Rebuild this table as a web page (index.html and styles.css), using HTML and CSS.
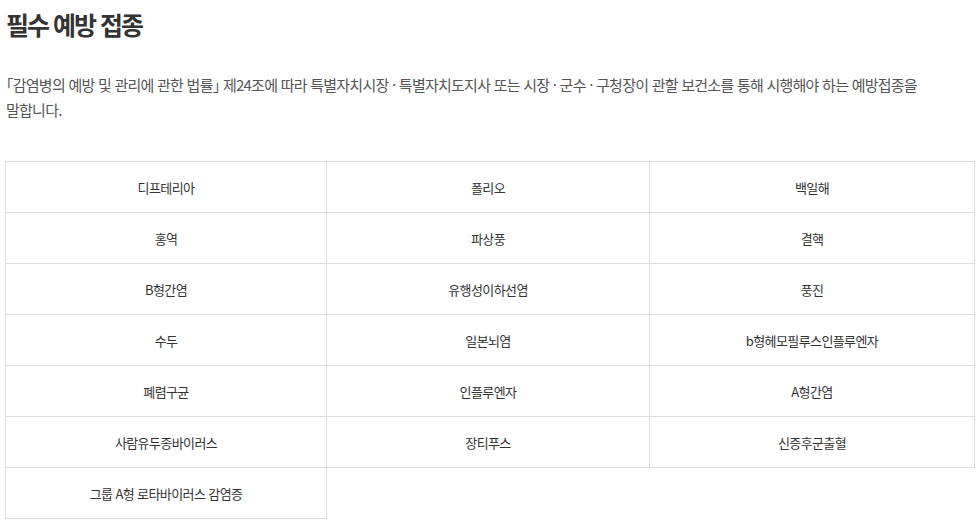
FILE: index.html
```html
<!DOCTYPE html>
<html lang="ko">
<head>
<meta charset="utf-8">
<link rel="stylesheet" href="styles.css">
</head>
<body>
<div class="page">
  <h2 class="title">필수 예방 접종</h2>
  <p class="desc">「감염병의 예방 및 관리에 관한 법률」 제24조에 따라 특별자치시장 · 특별자치도지사 또는 시장 · 군수 · 구청장이 관할 보건소를 통해 시행해야 하는 예방접종을 말합니다.</p>
  <ul class="grid">
    <li class="cell">디프테리아</li>
    <li class="cell">폴리오</li>
    <li class="cell">백일해</li>
    <li class="cell">홍역</li>
    <li class="cell">파상풍</li>
    <li class="cell">결핵</li>
    <li class="cell">B형간염</li>
    <li class="cell">유행성이하선염</li>
    <li class="cell">풍진</li>
    <li class="cell">수두</li>
    <li class="cell">일본뇌염</li>
    <li class="cell">b형헤모필루스인플루엔자</li>
    <li class="cell">폐렴구균</li>
    <li class="cell">인플루엔자</li>
    <li class="cell">A형간염</li>
    <li class="cell">사람유두종바이러스</li>
    <li class="cell">장티푸스</li>
    <li class="cell">신증후군출혈</li>
    <li class="cell">그룹 A형 로타바이러스 감염증</li>
  </ul>
</div>
</body>
</html>
```
FILE: styles.css
```css
* { box-sizing: border-box; }
html, body { margin: 0; padding: 0; background: #fff; }
body {
  font-family: "Noto Sans CJK KR", "Noto Sans", sans-serif;
  color: #333;
}
.page { padding: 0 3px 0 5px; }
.title {
  margin: 0;
  padding: 6px 0 0 1px;
  font-size: 25px;
  font-weight: 700;
  line-height: 36px;
  letter-spacing: -2px;
  color: #333;
}
.desc {
  margin: 30px 0 0 1px;
  width: 930px;
  font-size: 15px;
  line-height: 25px;
  letter-spacing: -0.75px;
  color: #555;
  word-break: keep-all;
  font-feature-settings: "halt" 1;
}
.grid {
  list-style: none;
  margin: 39px 0 0 0;
  padding: 0;
  width: 970px;
  display: grid;
  grid-template-columns: 322px 323px 325px;
}
.cell {
  height: 51px;
  display: flex;
  align-items: center;
  justify-content: center;
  font-size: 13px;
  letter-spacing: -0.6px;
  color: #333;
  border-right: 1px solid #ddd;
  border-bottom: 1px solid #ddd;
}
.cell:nth-child(3n+1) { border-left: 1px solid #ddd; }
.cell:nth-child(-n+3) { border-top: 1px solid #ddd; height: 52px; }
```
